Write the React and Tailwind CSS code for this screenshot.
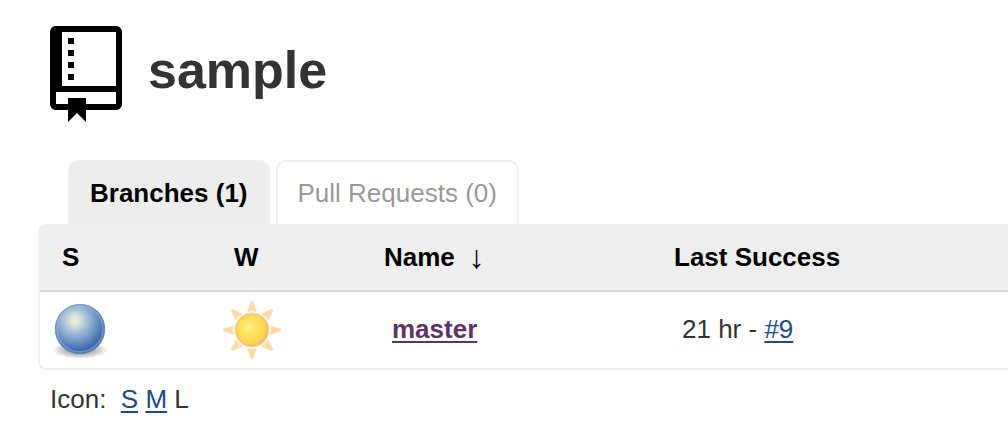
import React from "react";

const RAY_ANGLES = [0, 45, 90, 135, 180, 225, 270, 315];

function RepoIcon() {
  return (
    <svg className="h-24 w-[72px] shrink-0" viewBox="0 0 12 16" fill="#000" aria-hidden="true">
      <path
        fillRule="evenodd"
        d="M4 9H3V8h1v1zm0-3H3v1h1V6zm0-2H3v1h1V4zm0-2H3v1h1V2zm8-1v12c0 .55-.45 1-1 1H6v2l-1.5-1.5L3 16v-2H1c-.55 0-1-.45-1-1V1c0-.55.45-1 1-1h10c.55 0 1 .45 1 1zm-1 10H1v2h2v-1h3v1h5v-2zm0-10H2v9h9V1z"
      />
    </svg>
  );
}

function StatusBall() {
  return (
    <svg className="block size-16" viewBox="0 0 64 64" role="img" aria-label="Success">
      <defs>
        <radialGradient id="ball" cx="0.4" cy="0.33" r="0.68">
          <stop offset="0" stopColor="#f3f4df" />
          <stop offset="0.15" stopColor="#d6e0dc" />
          <stop offset="0.5" stopColor="#86a9d0" />
          <stop offset="0.85" stopColor="#456eaf" />
          <stop offset="1" stopColor="#3d66a8" />
        </radialGradient>
        <radialGradient id="ballShadow">
          <stop offset="0.3" stopColor="#000" stopOpacity="0.4" />
          <stop offset="1" stopColor="#000" stopOpacity="0" />
        </radialGradient>
      </defs>
      <ellipse cx="32" cy="52" rx="28" ry="9" fill="url(#ballShadow)" />
      <circle cx="32" cy="31" r="25" fill="url(#ball)" />
      <circle cx="32" cy="31" r="23" fill="none" stroke="#a3bede" strokeOpacity="0.5" strokeWidth="1.6" />
      <circle cx="32" cy="31" r="24.5" fill="none" stroke="#6389c0" strokeOpacity="0.7" strokeWidth="1.2" />
    </svg>
  );
}

function SunIcon() {
  return (
    <svg className="block size-16" viewBox="0 0 64 64" role="img" aria-label="Sunny">
      <defs>
        <radialGradient id="sun" cx="0.4" cy="0.42" r="0.64">
          <stop offset="0" stopColor="#fff08c" />
          <stop offset="0.3" stopColor="#fee466" />
          <stop offset="0.75" stopColor="#fcd750" />
          <stop offset="1" stopColor="#f4bb52" />
        </radialGradient>
      </defs>
      {RAY_ANGLES.map((angle) => (
        <path
          key={angle}
          d="M28.2 13L31.3 4L32.7 4L35.8 13Q32 11.5 28.2 13z"
          transform={`rotate(${angle} 32 32)`}
          fill="#fbda94"
          stroke="#fbdfbb"
          strokeWidth="1.8"
          strokeLinejoin="round"
        />
      ))}
      <circle cx="32" cy="32" r="17.6" fill="#fcdcb0" />
      <circle cx="32" cy="32" r="16" fill="url(#sun)" stroke="#f2bb68" strokeWidth="1" />
    </svg>
  );
}

const link = "text-[#204a87] underline decoration-2 underline-offset-3";

export default function App() {
  return (
    <main className="bg-white pt-[26px] pb-8 pl-[38px] font-['Liberation_Sans',Arial,sans-serif] text-[26px] leading-[30px] text-[#333]">
      <header className="flex items-start gap-[26px] pl-3">
        <RepoIcon />
        <h1 className="pt-[14px] text-[52px] leading-[60px] font-bold">sample</h1>
      </header>

      <nav className="mt-[38px] flex gap-[6px] pl-[30px]" aria-label="Views">
        <a
          href="#branches"
          aria-current="page"
          className="rounded-t-[10px] border-2 border-b-0 border-[#efefef] bg-[#ededed] px-5 py-4 font-bold text-black"
        >
          Branches (1)
        </a>
        <a
          href="#pull-requests"
          className="rounded-t-[10px] border-2 border-b-0 border-[#efefef] px-5 py-4 text-[#999]"
        >
          Pull Requests (0)
        </a>
      </nav>

      <div className="overflow-hidden rounded-l-lg border-2 border-r-0 border-[#efefef]">
        <table className="w-full table-fixed border-separate border-spacing-0 text-left">
          <colgroup>
            <col className="w-[172px]" />
            <col className="w-[150px]" />
            <col className="w-[290px]" />
            <col />
          </colgroup>
          <thead className="bg-[#efefef] text-black">
            <tr>
              <th className="border-b-2 border-[#d9d9d9] px-[22px] pt-4 pb-[18px]">S</th>
              <th className="border-b-2 border-[#d9d9d9] px-[22px] pt-4 pb-[18px]">W</th>
              <th className="border-b-2 border-[#d9d9d9] px-[22px] pt-4 pb-[18px]">
                <span className="flex h-[30px] items-center gap-[14px]">
                  Name
                  <span className="font-['Liberation_Serif',serif] text-[32px] leading-[30px] font-normal">↓</span>
                </span>
              </th>
              <th className="border-b-2 border-[#d9d9d9] px-[22px] pt-4 pb-[18px]">Last Success</th>
            </tr>
          </thead>
          <tbody>
            <tr>
              <td className="px-2 py-[6px]">
                <StatusBall />
              </td>
              <td className="px-2 py-[6px]">
                <SunIcon />
              </td>
              <td className="px-[30px] pb-[2px]">
                <a href="#master" className="font-bold text-[#5c3566] underline decoration-2 underline-offset-3">
                  master
                </a>
              </td>
              <td className="px-[30px] pb-[2px]">
                21 hr - <a href="#9" className={link}>#9</a>
              </td>
            </tr>
          </tbody>
        </table>
      </div>

      <p className="mt-[14px] pl-3">
        Icon:&nbsp; <a href="#small" className={link}>S</a>{" "}
        <a href="#medium" className={link}>M</a> L
      </p>
    </main>
  );
}
